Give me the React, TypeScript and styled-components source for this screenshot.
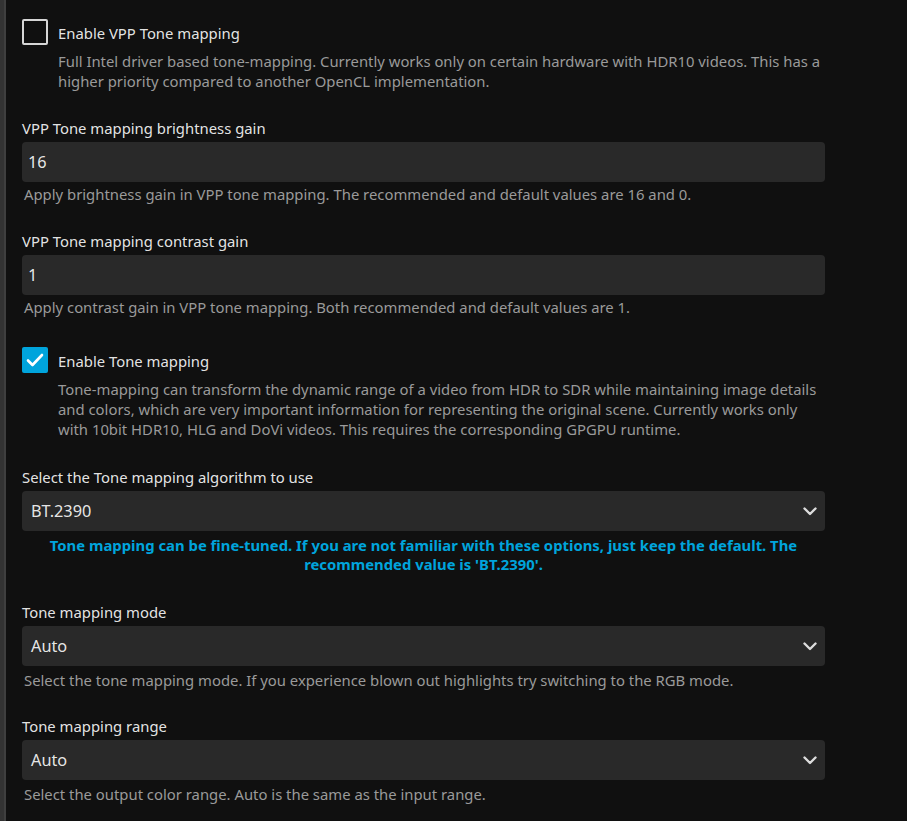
import styled, { createGlobalStyle } from "styled-components";

const GlobalStyle = createGlobalStyle`
  html, body {
    margin: 0;
    padding: 0;
    background: #101010;
  }
  body {
    font-family: "Noto Sans", "Open Sans", sans-serif;
    color: rgba(255, 255, 255, 0.87);
  }
`;

const Page = styled.div`
  display: flex;
  min-height: 821px;
  background: #101010;
`;

const Edge = styled.div`
  width: 4px;
  background: #333333;
  border-right: 2px solid #3f3f3f;
  flex-shrink: 0;
`;

const Content = styled.div`
  width: 803px;
  padding: 19px 0 0 16px;
  display: flex;
  flex-direction: column;
`;

const CheckboxField = styled.div<{ $mb?: number }>`
  margin-bottom: ${(p) => p.$mb ?? 27}px;
`;

const CheckRow = styled.label`
  display: flex;
  align-items: center;
  gap: 10px;
  height: 26px;
`;

const Box = styled.span<{ $checked?: boolean }>`
  width: 26px;
  height: 26px;
  box-sizing: border-box;
  border-radius: 2px;
  border: ${(p) => (p.$checked ? "none" : "2px solid #d6d6d6")};
  background: ${(p) => (p.$checked ? "#00a4dc" : "transparent")};
  display: flex;
  align-items: center;
  justify-content: center;
  flex-shrink: 0;
`;

const CheckLabel = styled.span`
  font-size: 14.85px;
  line-height: 20px;
  margin-top: 2px;
  color: rgba(255, 255, 255, 0.9);
`;

const CheckDesc = styled.div`
  margin: 6px 0 0 36px;
  font-size: 14.85px;
  line-height: 20px;
  color: #9a9a9a;
`;

const Field = styled.div<{ $mb?: number }>`
  display: flex;
  flex-direction: column;
  margin-bottom: ${(p) => p.$mb ?? 27}px;
`;

const FieldLabel = styled.label`
  font-size: 14.85px;
  line-height: 20px;
  margin-bottom: 4px;
  color: rgba(255, 255, 255, 0.9);
`;

const InputBox = styled.div<{ $select?: boolean }>`
  height: 40px;
  box-sizing: border-box;
  background: #292929;
  border-radius: 4px;
  display: flex;
  align-items: center;
  justify-content: space-between;
  padding: 0 8px 0 ${(p) => (p.$select ? 9 : 6)}px;
  font-size: 16.3px;
  color: rgba(255, 255, 255, 0.9);
`;

const FieldDesc = styled.div<{ $select?: boolean }>`
  margin-top: ${(p) => (p.$select ? 4 : 2)}px;
  padding-left: 2px;
  font-size: 14.85px;
  line-height: 20px;
  color: #9a9a9a;
`;

const Notice = styled.div`
  margin-top: 5px;
  text-align: center;
  font-size: 14.85px;
  line-height: 19px;
  font-weight: 700;
  color: #00a4dc;
`;

const Chevron = () => (
  <svg width="14" height="9" viewBox="0 0 14 9" fill="none">
    <path
      d="M1.5 1.5 L7 7 L12.5 1.5"
      stroke="#dcdcdc"
      strokeWidth="2.4"
      strokeLinecap="round"
      strokeLinejoin="round"
    />
  </svg>
);

const Check = () => (
  <svg width="18" height="14" viewBox="0 0 18 14" fill="none">
    <path
      d="M2 7.5 L6.5 12 L16 2"
      stroke="#ffffff"
      strokeWidth="2.6"
      strokeLinecap="round"
      strokeLinejoin="round"
    />
  </svg>
);

interface ICheckbox {
  label: string;
  description: string;
  checked?: boolean;
  mb?: number;
}

const Checkbox = ({ label, description, checked, mb }: ICheckbox) => (
  <CheckboxField $mb={mb}>
    <CheckRow>
      <Box $checked={checked}>{checked && <Check />}</Box>
      <CheckLabel>{label}</CheckLabel>
    </CheckRow>
    <CheckDesc>{description}</CheckDesc>
  </CheckboxField>
);

interface IInput {
  label: string;
  value: string;
  description?: string;
  select?: boolean;
  mb?: number;
  children?: React.ReactNode;
}

const InputField = ({ label, value, description, select, mb, children }: IInput) => (
  <Field $mb={mb}>
    <FieldLabel>{label}</FieldLabel>
    <InputBox $select={select}>
      <span>{value}</span>
      {select && <Chevron />}
    </InputBox>
    {description && <FieldDesc $select={select}>{description}</FieldDesc>}
    {children}
  </Field>
);

const App = () => {
  return (
    <>
      <GlobalStyle />
      <Page>
        <Edge />
        <Content>
          <Checkbox
            label="Enable VPP Tone mapping"
            description="Full Intel driver based tone-mapping. Currently works only on certain hardware with HDR10 videos. This has a higher priority compared to another OpenCL implementation."
          />
          <InputField
            label="VPP Tone mapping brightness gain"
            value="16"
            description="Apply brightness gain in VPP tone mapping. The recommended and default values are 16 and 0."
          />
          <InputField
            label="VPP Tone mapping contrast gain"
            value="1"
            description="Apply contrast gain in VPP tone mapping. Both recommended and default values are 1."
            mb={30}
          />
          <Checkbox
            checked
            label="Enable Tone mapping"
            description="Tone-mapping can transform the dynamic range of a video from HDR to SDR while maintaining image details and colors, which are very important information for representing the original scene. Currently works only with 10bit HDR10, HLG and DoVi videos. This requires the corresponding GPGPU runtime."
            mb={28}
          />
          <InputField
            label="Select the Tone mapping algorithm to use"
            value="BT.2390"
            select
            mb={28}
          >
            <Notice>
              Tone mapping can be fine-tuned. If you are not familiar with these options, just keep the
              default. The recommended value is 'BT.2390'.
            </Notice>
          </InputField>
          <InputField
            label="Tone mapping mode"
            value="Auto"
            select
            description="Select the tone mapping mode. If you experience blown out highlights try switching to the RGB mode."
            mb={26}
          />
          <InputField
            label="Tone mapping range"
            value="Auto"
            select
            description="Select the output color range. Auto is the same as the input range."
          />
        </Content>
      </Page>
    </>
  );
};

export default App;
